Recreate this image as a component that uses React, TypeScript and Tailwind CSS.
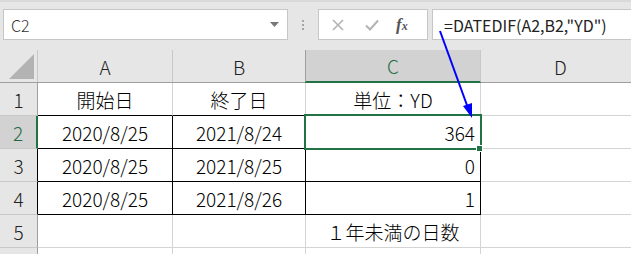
import React from "react";

const F = { fontFamily: '"Noto Sans CJK JP", "Noto Sans", sans-serif' };

type Cell = { t?: string; align?: "c" | "r"; b?: string; r?: string };

const colW = [135, 133, 175, 160];

const rows: { n: string; sel?: boolean; cells: Cell[] }[] = [
  {
    n: "1",
    cells: [
      { t: "開始日", align: "c", b: "border-b-black", r: "border-r-[#d4d4d4]" },
      { t: "終了日", align: "c", b: "border-b-black", r: "border-r-[#d4d4d4]" },
      { t: "単位：YD", align: "c", b: "border-b-black", r: "border-r-[#d4d4d4]" },
      {},
    ],
  },
  {
    n: "2",
    sel: true,
    cells: [
      { t: "2020/8/25", align: "c", b: "border-b-black", r: "border-r-black" },
      { t: "2021/8/24", align: "c", b: "border-b-black", r: "border-r-black" },
      { t: "364", align: "r", b: "border-b-black", r: "border-r-black" },
      {},
    ],
  },
  {
    n: "3",
    cells: [
      { t: "2020/8/25", align: "c", b: "border-b-black", r: "border-r-black" },
      { t: "2021/8/25", align: "c", b: "border-b-black", r: "border-r-black" },
      { t: "0", align: "r", b: "border-b-black", r: "border-r-black" },
      {},
    ],
  },
  {
    n: "4",
    cells: [
      { t: "2020/8/25", align: "c", b: "border-b-black", r: "border-r-black" },
      { t: "2021/8/26", align: "c", b: "border-b-black", r: "border-r-black" },
      { t: "1", align: "r", b: "border-b-black", r: "border-r-black" },
      {},
    ],
  },
  {
    n: "5",
    cells: [{}, {}, { t: "１年未満の日数", align: "c" }, {}],
  },
  { n: "", cells: [{}, {}, {}, {}] },
];

export default function App() {
  return (
    <div className="relative w-[631px] h-[254px] overflow-hidden bg-white font-light" style={F}>
      {/* Toolbar */}
      <div className="h-[50px] bg-[#e6e6e6] border-t-2 border-[#d9d9d9] flex items-start pt-[7px]">
        <div className="ml-[3px] shrink-0 w-[285px] h-[31px] bg-white border border-[#c6c6c6] flex items-center justify-between pl-[7px] pr-[8px]">
          <span className="text-[16px] text-[#333] leading-none">C2</span>
          <svg width="9" height="5" viewBox="0 0 9 5"><path d="M0 0h9L4.5 5z" fill="#777" /></svg>
        </div>
        <div className="shrink-0 w-[30px] h-[31px] flex flex-col items-center justify-center gap-[2px]">
          <div className="w-[2px] h-[2px] bg-[#a6a6a6]" />
          <div className="w-[2px] h-[2px] bg-[#a6a6a6]" />
          <div className="w-[2px] h-[2px] bg-[#a6a6a6]" />
        </div>
        <div className="shrink-0 w-[110px] h-[31px] bg-white border border-[#c6c6c6] flex items-center">
          <svg className="ml-[13px]" width="12" height="12" viewBox="0 0 12 12">
            <path d="M1 1L11 11M11 1L1 11" stroke="#b3b3b3" strokeWidth="1.6" />
          </svg>
          <svg className="ml-[21px]" width="14" height="12" viewBox="0 0 14 12">
            <path d="M1 6.5L5 10.5L13 1.5" stroke="#b3b3b3" strokeWidth="2" fill="none" />
          </svg>
          <span className="ml-[17px] text-[17px] italic font-bold text-[#555] leading-none" style={{ fontFamily: '"Liberation Serif", serif' }}>
            f<span className="text-[12px]">x</span>
          </span>
        </div>
        <div className="ml-[4px] flex-1 h-[31px] bg-white border border-[#c6c6c6] border-r-0 flex items-center pl-[11px]">
          <span className="text-[16px] text-[#222] leading-none whitespace-nowrap font-normal">=DATEDIF(A2,B2,"YD")</span>
        </div>
      </div>

      {/* Column header */}
      <div className="flex h-[33px] bg-[#e6e6e6] border-b border-[#9e9e9e]">
        <div className="shrink-0 w-[38px] border-r border-[#c8c8c8] flex items-end justify-end pr-[3px] pb-[3px]">
          <svg width="25" height="25" viewBox="0 0 25 25"><path d="M25 0V25H0z" fill="#b3b3b3" /></svg>
        </div>
        {["A", "B", "C", "D"].map((h, i) => (
          <div
            key={h}
            className={
              "shrink-0 flex items-center justify-center text-[19px] leading-none " +
              (i === 2
                ? "bg-[#d2d2d2] text-[#1e6b3f] border-l border-l-[#9e9e9e] border-b-2 border-b-[#217346] -mb-[1px] -ml-[1px] border-r border-r-[#c8c8c8]"
                : "text-[#222] border-r border-[#c8c8c8]")
            }
            style={{ width: colW[i] + (i === 2 ? 1 : 0) }}
          >
            {h}
          </div>
        ))}
      </div>

      {/* Rows */}
      {rows.map((row, ri) => (
        <div key={ri} className="flex h-[33px]">
          <div
            className={
              "shrink-0 w-[38px] flex items-center justify-center text-[19px] leading-none border-b border-[#c8c8c8] " +
              (row.sel
                ? "bg-[#d2d2d2] text-[#1e6b3f] border-r-2 border-r-[#217346]"
                : ri >= 2 && ri <= 3
                ? "bg-[#e6e6e6] text-[#222] border-r border-r-black"
                : "bg-[#e6e6e6] text-[#222] border-r border-r-[#9e9e9e]")
            }
          >
            {row.n}
          </div>
          {row.cells.map((c, ci) => (
            <div
              key={ci}
              className={
                "shrink-0 flex items-center text-[19px] leading-none text-black border-b border-r " +
                (c.b ?? "border-b-[#d4d4d4]") +
                " " +
                (c.r ?? "border-r-[#d4d4d4]") +
                " " +
                (c.align === "r" ? "justify-end pr-[5px]" : "justify-center")
              }
              style={{ width: colW[ci] }}
            >
              {c.t}
            </div>
          ))}
        </div>
      ))}

      {/* Selected cell */}
      <div className="absolute left-[304px] top-[114px] w-[178px] h-[36px] border-2 border-[#217346] pointer-events-none" />
      <div className="absolute left-[476px] top-[145px] w-[7px] h-[7px] bg-[#217346] border border-white" />

      {/* Arrow */}
      <svg className="absolute left-0 top-0 pointer-events-none" width="631" height="254">
        <line x1="440" y1="31" x2="468" y2="108" stroke="#0000ff" strokeWidth="2" />
        <path d="M472 118L463 106L472 103z" fill="#0000ff" />
      </svg>
    </div>
  );
}
